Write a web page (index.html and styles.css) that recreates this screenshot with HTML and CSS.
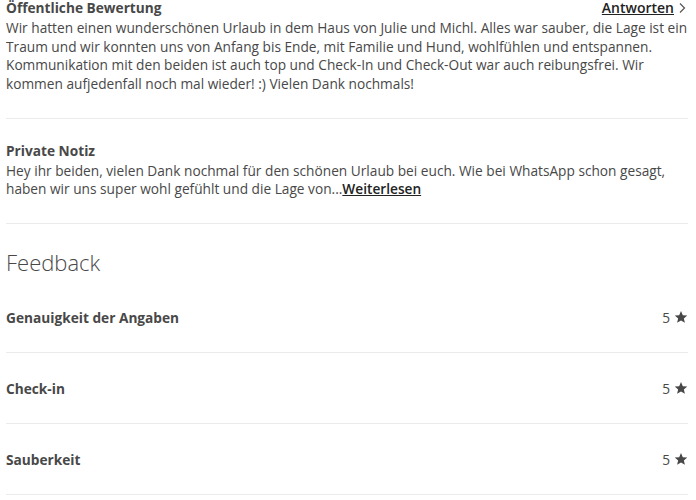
FILE: index.html
```html
<!DOCTYPE html>
<html lang="de">
<head>
<meta charset="utf-8">
<link rel="stylesheet" href="styles.css">
</head>
<body>
<div class="page">
  <section class="block">
    <div class="head">
      <h3 class="label">Öffentliche Bewertung</h3>
      <a class="reply" href="#">Antworten</a>
      <svg class="chev" viewBox="0 0 8 12" width="8" height="12"><path d="M2 1.5 L6.5 6 L2 10.5" fill="none" stroke="#555" stroke-width="1.2"/></svg>
    </div>
    <p class="text">Wir hatten einen wunderschönen Urlaub in dem Haus von Julie und Michl. Alles war sauber, die Lage ist ein Traum und wir konnten uns von Anfang bis Ende, mit Familie und Hund, wohlfühlen und entspannen. Kommunikation mit den beiden ist auch top und Check-In und Check-Out war auch reibungsfrei. Wir kommen aufjedenfall noch mal wieder! :) Vielen Dank nochmals!</p>
  </section>
  <section class="block">
    <h3 class="label">Private Notiz</h3>
    <p class="text">Hey ihr beiden, vielen Dank nochmal für den schönen Urlaub bei euch. Wie bei WhatsApp schon gesagt, haben wir uns super wohl gefühlt und die Lage von...<a class="more" href="#">Weiterlesen</a></p>
  </section>
  <h2 class="title">Feedback</h2>
  <div class="row"><span class="name">Genauigkeit der Angaben</span><span class="score">5 <svg class="star" viewBox="0 0 24 24" width="14" height="14"><path d="M12 1.8l3.1 7.1 7.6.6-5.8 5 1.8 7.5L12 18l-6.7 4 1.8-7.5-5.8-5 7.6-.6z" fill="#484848"/></svg></span></div>
  <div class="row"><span class="name">Check-in</span><span class="score">5 <svg class="star" viewBox="0 0 24 24" width="14" height="14"><path d="M12 1.8l3.1 7.1 7.6.6-5.8 5 1.8 7.5L12 18l-6.7 4 1.8-7.5-5.8-5 7.6-.6z" fill="#484848"/></svg></span></div>
  <div class="row"><span class="name">Sauberkeit</span><span class="score">5 <svg class="star" viewBox="0 0 24 24" width="14" height="14"><path d="M12 1.8l3.1 7.1 7.6.6-5.8 5 1.8 7.5L12 18l-6.7 4 1.8-7.5-5.8-5 7.6-.6z" fill="#484848"/></svg></span></div>
</div>
</body>
</html>
```

FILE: styles.css
```css
html, body {
  margin: 0;
  padding: 0;
  background: #ffffff;
}
body {
  font-family: "Open Sans", "Liberation Sans", sans-serif;
  color: #484848;
  font-size: 13.7px;
}
.page {
  width: 682px;
  padding: 0 8px 0 6px;
}
.block {
  padding-bottom: 24px;
  border-bottom: 1px solid #ebebeb;
  margin-bottom: 24px;
}
.head {
  display: flex;
  align-items: center;
  margin-bottom: 3px;
}
.label {
  margin: 0 0 3px;
  font-size: 13.7px;
  font-weight: 700;
  line-height: 16px;
  color: #484848;
  flex: 1;
}
.head .label {
  margin: 0;
}
.reply {
  font-weight: 600;
  color: #222;
  text-decoration: underline;
  font-size: 14px;
  line-height: 16px;
}
.chev {
  margin-left: 4px;
  margin-right: 2px;
}
.text {
  margin: 0;
  line-height: 18.67px;
}
.more {
  color: #222;
  font-weight: 600;
  text-decoration: underline;
}
.title {
  margin: 0 0 6px;
  font-size: 22px;
  font-weight: 300;
  line-height: 28px;
  color: #484848;
}
.row {
  display: flex;
  justify-content: space-between;
  align-items: center;
  height: 70px;
  border-bottom: 1px solid #ebebeb;
}
.name {
  font-weight: 700;
}
.score {
  display: flex;
  align-items: center;
  gap: 4px;
}
```
